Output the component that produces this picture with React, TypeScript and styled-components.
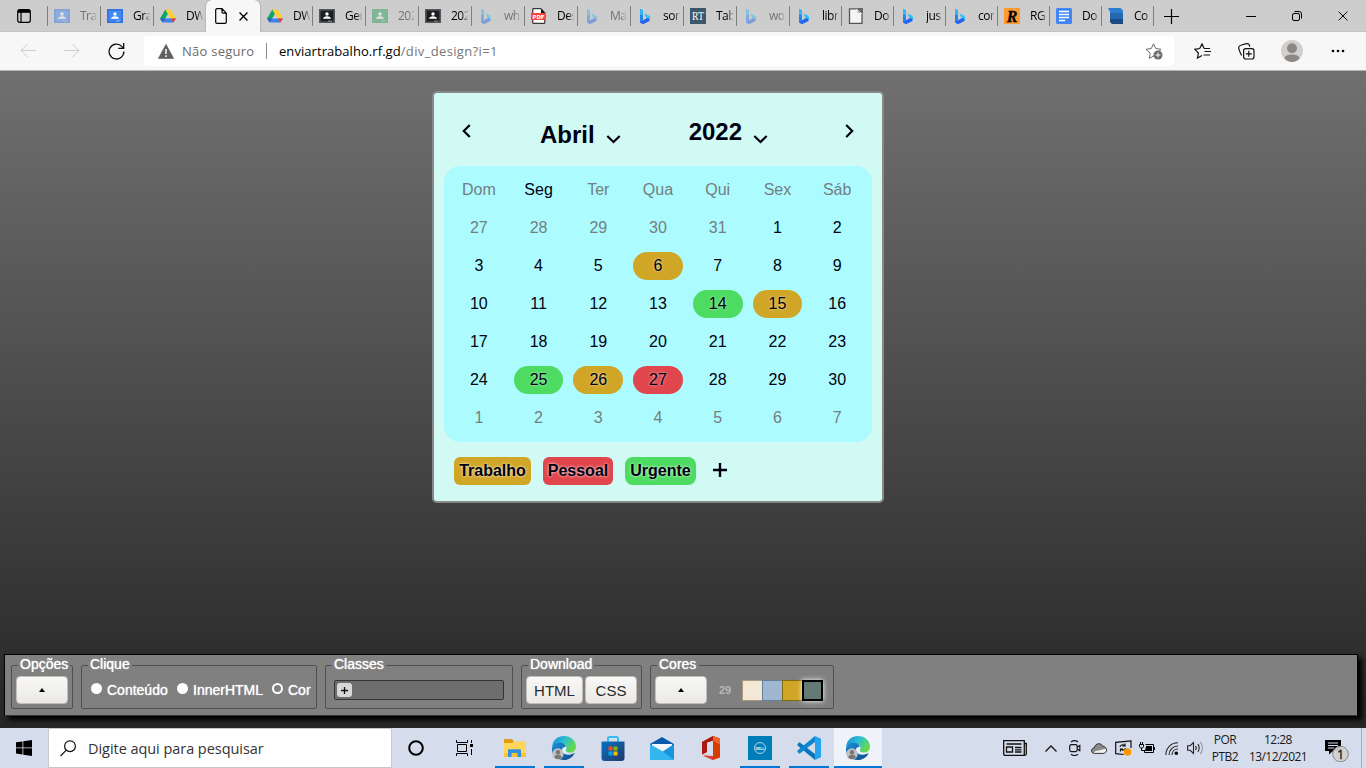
import React from 'react';
import styled, { createGlobalStyle, css } from 'styled-components';

const GlobalStyle = createGlobalStyle`
  *, *::before, *::after { box-sizing: border-box; }
  html, body { margin: 0; padding: 0; overflow: hidden; }
  button { font: inherit; padding: 0; margin: 0; }
`;

const uiFont = `'Open Sans', 'Noto Sans', sans-serif`;
const pageFont = `'Liberation Sans', Arial, sans-serif`;

const Screen = styled.div`
  width: 1366px;
  height: 768px;
  display: flex;
  flex-direction: column;
  font-family: ${uiFont};
  overflow: hidden;
`;

/* ---------- Browser tabs ---------- */

const TabStrip = styled.div`
  height: 32px;
  flex: none;
  display: flex;
  align-items: flex-start;
  background: #cdcdcd;
  border-bottom: 1px solid #c3c3c3;
`;

const TabMenu = styled.div`
  width: 47px;
  height: 32px;
  display: flex;
  align-items: center;
  justify-content: center;
`;

const Tab = styled.div<{ $width: number; $line: boolean; $dim: boolean }>`
  width: ${p => p.$width}px;
  height: 20px;
  margin-top: 6px;
  flex: none;
  display: flex;
  align-items: center;
  gap: 10px;
  padding-left: 6px;
  border-left: 1px solid ${p => (p.$line ? '#808080' : 'transparent')};
  > * { opacity: ${p => (p.$dim ? 0.45 : 1)}; }
`;

const TabTitle = styled.span`
  width: 18px;
  font-size: 12px;
  line-height: 20px;
  letter-spacing: -0.5px;
  color: #000;
  white-space: nowrap;
  overflow: hidden;
  mask-image: linear-gradient(to right, #000 60%, transparent 98%);
`;

const ActiveTab = styled.div`
  width: 54px;
  height: 32px;
  flex: none;
  display: flex;
  align-items: center;
  gap: 12px;
  padding-left: 9px;
  background: #f7f7f7;
  border-radius: 6px 6px 0 0;
  box-shadow: 0 0 2px rgba(0, 0, 0, 0.35);
`;

const NewTab = styled.div`
  width: 36px;
  height: 32px;
  display: flex;
  align-items: center;
  justify-content: center;
  border-left: 1px solid transparent;
  background: linear-gradient(#808080, #808080) 0 6px / 1px 20px no-repeat border-box;
`;

const WindowControls = styled.div`
  display: flex;
  margin-left: auto;
`;

const WindowButton = styled.div`
  width: 46px;
  height: 32px;
  display: flex;
  align-items: center;
  justify-content: center;
`;

/* ---------- Address toolbar ---------- */

const Toolbar = styled.div`
  height: 39px;
  flex: none;
  display: flex;
  align-items: center;
  padding: 0 6px;
  background: #f7f7f7;
  border-bottom: 1px solid #b4b4b4;
`;

const ToolSlot = styled.div<{ $before?: number }>`
  width: 44px;
  height: 30px;
  flex: none;
  margin-left: ${p => p.$before ?? 0}px;
  display: flex;
  align-items: center;
  justify-content: center;
`;

const AddressBar = styled.div`
  width: 1030px;
  height: 30px;
  margin: 0 6px;
  padding: 0 11px 0 14px;
  display: flex;
  align-items: center;
  background: #fff;
  border-radius: 4px;
  font-size: 13px;
`;

const Security = styled.span`
  margin-left: 8px;
  color: #6b6b6b;
  width: 74px;
  letter-spacing: 0.25px;
  white-space: nowrap;
`;

const AddressLine = styled.span`
  width: 1px;
  height: 16px;
  margin: 0 12px 0 10px;
  background: #8a8a8a;
`;

const Url = styled.span`
  color: #777;
  letter-spacing: 0.35px;
  white-space: nowrap;
  flex: 1;
  b { color: #000; font-weight: 400; letter-spacing: 0.06px; }
`;

/* ---------- Page ---------- */

const Page = styled.main`
  height: 657px;
  flex: none;
  display: flex;
  flex-direction: column;
  justify-content: space-between;
  padding: 20px 8px 12px 4px;
  background: linear-gradient(#707070, #262626);
  font-family: ${pageFont};
`;

const Calendar = styled.section`
  width: 452px;
  height: 412px;
  margin-left: 428px;
  border: 2px solid #888;
  border-radius: 5px;
  background: #d2faf4;
  color: #000010;
  padding: 0 10px;
`;

const CalendarHeader = styled.header`
  height: 73px;
  display: flex;
  align-items: flex-start;
`;

const Arrow = styled.span`
  display: flex;
  margin: 31px 18px 0;
`;

const Picker = styled.div<{ $left: number; $top: number; $drop: number }>`
  display: flex;
  margin: ${p => p.$top}px 0 0 ${p => p.$left}px;
  font-size: 24px;
  line-height: 28px;
  font-weight: 700;
  svg { margin: ${p => p.$drop}px 0 0 11px; }
`;

const Spacer = styled.span`
  flex: 1;
`;

const MonthGrid = styled.div`
  height: 276px;
  padding: 5px;
  display: grid;
  grid-template-columns: repeat(7, 1fr);
  grid-auto-rows: 38px;
  border-radius: 16px;
  background: #acfbff;
`;

const Day = styled.div<{ $muted: boolean; $color?: string }>`
  margin: 5px;
  border-radius: 14px;
  font-size: 16px;
  line-height: 27px;
  text-align: center;
  color: ${p => (p.$muted ? '#737f7f' : '#000010')};
  ${p => p.$color && css`
    background: ${p.$color};
    text-shadow: 0 0 3px rgba(255, 255, 255, 0.7);
  `}
`;

const Tags = styled.footer`
  display: flex;
  align-items: center;
  padding: 15px 10px 0;
  gap: 12px;
`;

const Tag = styled.span<{ $color: string; $width: number; $radius?: number }>`
  width: ${p => p.$width}px;
  height: 28px;
  border-radius: ${p => p.$radius ?? 6}px;
  background: ${p => p.$color};
  font-size: 16px;
  line-height: 27px;
  font-weight: 700;
  text-align: center;
  text-shadow: 0 0 3px #fff;
`;

const AddTag = styled.span`
  display: flex;
  margin-left: 5px;
  margin-top: -2px;
`;

/* ---------- Editor bar ---------- */

const EditorBar = styled.section`
  height: 62px;
  display: flex;
  gap: 8px;
  padding: 10px 6px 0;
  background: #808080;
  border: 1px solid #000;
  border-bottom-color: #333;
  box-shadow: 4px 4px 5px #000;
  color: #fff;
  font-size: 14px;
  text-shadow: 0 0 1px #fff;
`;

const Group = styled.div<{ $width: number }>`
  width: ${p => p.$width}px;
  height: 44px;
  flex: none;
  border: 1px solid #505050;
  border-radius: 2px;
  display: flex;
  flex-direction: column;
`;

const GroupName = styled.span<{ $width: number }>`
  width: ${p => p.$width}px;
  height: 16px;
  margin: -10px 0 0 6px;
  padding-left: 2px;
  line-height: 17px;
  background: #808080;
  white-space: nowrap;
`;

const GroupBody = styled.div<{ $left?: number }>`
  height: 28px;
  margin-top: 4px;
  padding-left: ${p => p.$left ?? 4}px;
  display: flex;
  align-items: center;
  gap: 2px;
`;

const LightButton = styled.button<{ $width: number }>`
  width: ${p => p.$width}px;
  height: 28px;
  border: 1px solid #c5beb8;
  border-radius: 4px;
  background: linear-gradient(#f8f8f7, #eae9e7);
  color: #2a2a2a;
  font-size: 15px;
  display: flex;
  align-items: center;
  justify-content: center;
  text-shadow: none;
`;

const Triangle = styled.i`
  border: 3px solid transparent;
  border-top: 0;
  border-bottom: 4px solid #000;
`;

const RadioLabel = styled.label<{ $width: number }>`
  width: ${p => p.$width}px;
  display: flex;
  align-items: center;
  gap: 5px;
  white-space: nowrap;
`;

const RadioMark = styled.i<{ $filled: boolean }>`
  width: 11px;
  height: 11px;
  margin-top: -3px;
  border: 2px solid #fff;
  border-radius: 50%;
  background: ${p => (p.$filled ? '#fff' : 'transparent')};
`;

const ClassField = styled.div`
  width: 170px;
  height: 20px;
  padding: 2px;
  border: 1px solid #333;
  border-radius: 2px;
  background: #6e6e6e;
`;

const ClassAdd = styled.span`
  width: 15px;
  height: 14px;
  border-radius: 3px;
  background: #d8d8d8;
  display: flex;
  align-items: center;
  justify-content: center;
`;

const Count = styled.span`
  width: 21px;
  margin-left: 10px;
  color: #b8b8b8;
  font-size: 11px;
  font-weight: 700;
  text-shadow: none;
`;

const Swatches = styled.div`
  display: flex;
`;

const Swatch = styled.span<{ $color: string; $edge: string; $active?: boolean }>`
  width: ${p => (p.$active ? 21 : 20)}px;
  height: 21px;
  background: ${p => p.$color};
  border: 1px solid ${p => p.$edge};
  border-right: 0;
  ${p => p.$active && css`
    border: 2px solid #000;
    box-shadow: 0 0 5px #fff;
  `}
`;

/* ---------- Taskbar ---------- */

const Taskbar = styled.footer`
  height: 40px;
  flex: none;
  display: flex;
  background: #d5dcec;
`;

const TaskButton = styled.div<{ $open?: boolean; $active?: boolean; $before?: number }>`
  width: 48px;
  height: 40px;
  flex: none;
  margin-left: ${p => p.$before ?? 0}px;
  display: flex;
  align-items: center;
  justify-content: center;
  ${p => p.$open && css`
    background: linear-gradient(#0078d7, #0078d7) center bottom / ${p.$active ? 48 : 40}px 2px no-repeat
      ${p.$active ? ', #eff2f9' : ''};
  `}
`;

const SearchBox = styled.div`
  width: 344px;
  height: 40px;
  display: flex;
  align-items: center;
  gap: 12px;
  padding-left: 11px;
  background: #fff;
  border: 1px solid #c8c8c8;
  color: #333;
  font-size: 14.5px;
  letter-spacing: -0.05px;
`;

const Tray = styled.div`
  margin-left: auto;
  display: flex;
`;

const TraySlot = styled.div<{ $width: number }>`
  width: ${p => p.$width}px;
  height: 40px;
  display: flex;
  align-items: center;
  justify-content: center;
`;

const TrayText = styled.div<{ $width: number; $tight: number }>`
  width: ${p => p.$width}px;
  padding-top: 3px;
  font-size: 12px;
  line-height: 17px;
  letter-spacing: ${p => p.$tight}px;
  text-align: center;
  color: #1a1a1a;
  white-space: nowrap;
`;

const DesktopEdge = styled.div`
  width: 5px;
  border-left: 1px solid #a9afbb;
`;

/* ---------- Icons ---------- */

const ClassroomIcon = ({ frame, fill }: { frame: string; fill: string }) => (
  <svg width="16" height="16" viewBox="0 0 16 16">
    <path d="M0 1h16v14H0z" fill={frame} />
    <path d="M1.6 2.6h12.8v10.8H1.6z" fill={fill} />
    <circle cx="8" cy="6" r="1.7" fill="#fff" />
    <path d="M4 10.800c0-3.400 8-3.400 8 0z" fill="#fff" />
    <path d="M9 12.600h4v.9H9z" fill="#ddd" fillOpacity=".6" />
  </svg>
);

const DriveIcon = () => (
  <svg width="16" height="16" viewBox="0 0 16 16">
    <path d="M5.3 1.4 0 10.5l2.7 4L8 5.8z" fill="#11a663" />
    <path d="M5.3 1.4h5.2L16 10.5h-5.3z" fill="#ffcf33" />
    <path d="m5.3 10.5-2.6 4h10.6l2.7-4z" fill="#3f7ff0" />
    <path d="m10.7 10.5 2.6 4 2.7-4z" fill="#ea4335" />
    <path d="m0 10.5 2.7 4 2.6-4z" fill="#2460d0" />
  </svg>
);

const BingIcon = () => (
  <svg width="16" height="16" viewBox="0 0 16 16">
    <path d="m3 .8 3 1.300v10L3 14z" fill="#35b4f2" />
    <path d="M3 7h3v5L3 14z" fill="#1e86ee" />
    <path d="m3 13.500 3-1.300 3.500-2 3.500-1v2c0 1-.6 1.700-1.400 2.200L7 15.800c-.7.4-1.400.4-2 0L3 14.500z" fill="#2464ee" />
    <path d="m7.300 5.600 4 1.700c1.300.6 1.900 1.500 1.900 2.900 0 .8-.3 1.500-.7 2-.3-1-1-1.700-2-2.100l-1.400-.7z" fill="#2ec0ef" />
  </svg>
);

const PdfIcon = () => (
  <svg width="16" height="16" viewBox="0 0 16 16">
    <path d="M1.800.7h8.400l3.600 4v10.600h-12z" fill="#fff" stroke="#111" />
    <path d="M10 .5V5h4z" fill="#111" />
    <path d="M0 5h15v7H0z" fill="#fa4545" />
    <text x="7.5" y="10.5" textAnchor="middle" fontFamily="DejaVu Sans" fontWeight="700" fontSize="5.400" fill="#fff">PDF</text>
  </svg>
);

const RtIcon = () => (
  <svg width="16" height="16" viewBox="0 0 16 16">
    <path d="M0 0h16v16H0z" fill="#3c566b" />
    <text x="8" y="12" textAnchor="middle" fontFamily="Liberation Serif" fontSize="11.500" textLength="12" lengthAdjust="spacingAndGlyphs" fill="#fff">RT</text>
  </svg>
);

const RIcon = () => (
  <svg width="16" height="16" viewBox="0 0 16 16">
    <path d="M0 0h16v16H0z" fill="#ff9933" />
    <text x="8" y="13.500" textAnchor="middle" fontFamily="Liberation Serif" fontStyle="italic" fontWeight="700" fontSize="16" fill="#000" stroke="#000" strokeWidth=".3">R</text>
  </svg>
);

const OfficeDocIcon = () => (
  <svg width="16" height="16" viewBox="0 0 16 16">
    <path d="M1.500.8h8L14 5v10.300H1.500z" fill="#f5f5f5" stroke="#555" strokeWidth="1.300" />
    <path d="M8.500 0H15v6z" fill="#666" />
    <path d="M9 1v4.500h5" fill="#bbb" stroke="#eee" />
  </svg>
);

const GoogleDocIcon = () => (
  <svg width="16" height="16" viewBox="0 0 16 16">
    <rect width="16" height="16" rx="1.500" fill="#4285f4" />
    <path d="M3 3.500h10M3 6.500h10M3 9.500h10M3 12.500h6" stroke="#fff" strokeWidth="1.400" />
  </svg>
);

const BookIcon = () => (
  <svg width="16" height="16" viewBox="0 0 16 16">
    <path d="M0 0h12.500L15 2.500V10H2V4z" fill="#2d7dd2" />
    <path d="M2 5h13v6H2z" fill="#2468ad" />
    <path d="M2 11h13v5H4l-2-2z" fill="#1b4b85" />
  </svg>
);

const FileIcon = () => (
  <svg width="12" height="16" viewBox="0 0 12 16" fill="none" stroke="#000" strokeWidth="1.200">
    <path d="M2 .7h5l4.300 4.500V14c0 .8-.5 1.300-1.300 1.300H2c-.8 0-1.300-.5-1.300-1.300V2C.7 1.200 1.200.7 2 .7zM7 .7V4c0 .8.4 1.200 1.200 1.200h3.100" />
  </svg>
);

const Cross = ({ size, weight }: { size: number; weight: number }) => (
  <svg width={size} height={size} viewBox="0 0 10 10" stroke="#000" strokeWidth={weight}>
    <path d="m.6.6 8.800 8.800M9.400.6.6 9.400" />
  </svg>
);

const EdgeIcon = () => (
  <svg width="26" height="26" viewBox="0 0 26 26">
    <defs>
      <linearGradient id="edgeTop" x1="0" y1="0" x2="1" y2=".5">
        <stop offset="0" stopColor="#1481d4" />
        <stop offset=".5" stopColor="#2bbfd3" />
        <stop offset="1" stopColor="#67d94c" />
      </linearGradient>
      <linearGradient id="edgeLow" x1="0" y1="0" x2="1" y2="1">
        <stop offset="0" stopColor="#1b8fd8" />
        <stop offset="1" stopColor="#114a8b" />
      </linearGradient>
    </defs>
    <path d="M1 12C2 4.500 7 1 13 1c7 0 12 5 12 10.500 0 4-3 6-6 6-3.500 0-5-1.500-4-3 1.500-2.500-.5-5.500-4-5.500-4 0-8 .8-10 3z" fill="url(#edgeTop)" />
    <path d="M1 13c1-4 5-6 8.500-5.500 3 .3 5 2.500 5.300 4.500-5-1-5.800 7 2.200 7.500 3 .1 5-.5 6.700-1.800C22 22 18 25 13 25 5 25 0 19 1 13z" fill="url(#edgeLow)" />
    <path d="M14.500 11.700c-2.500.8-3.800 3.500-2.300 5.600 1.400 2 5.300 2.700 8.800 1.500-3.500.3-5.500-.7-6.300-2-.7-1.200.9-2.500.5-4.300z" fill="#e8f4ff" />
    <circle cx="7" cy="19" r="5.700" fill="#c2c2c2" />
    <circle cx="7" cy="17.300" r="2.200" fill="#777" />
    <path d="M3.300 22.500c.2-4 7.200-4 7.400 0-2 2-5.400 2-7.400 0z" fill="#777" />
  </svg>
);

const ExplorerIcon = () => (
  <svg width="22" height="19" viewBox="0 0 22 19">
    <path d="M0 1.500C0 .6.5 0 1.300 0H8l2 2.500V6H0z" fill="#e19d0b" />
    <path d="M0 4h8l2-1.600h10.700c.8 0 1.300.5 1.300 1.200V17H0z" fill="#ffd65b" />
    <path d="M0 14h22v4H0z" fill="#f9c337" />
    <path d="M4 18v-6.500c0-.8.5-1.200 1.200-1.200h10.600c.8 0 1.200.5 1.200 1.200V18h-3.500v-4h-6v4z" fill="#3390df" />
  </svg>
);

const StoreIcon = () => (
  <svg width="24" height="25" viewBox="0 0 24 25">
    <defs>
      <linearGradient id="bag" x1="0" y1="0" x2="1" y2="1">
        <stop offset="0" stopColor="#0871c6" />
        <stop offset="1" stopColor="#243866" />
      </linearGradient>
    </defs>
    <path d="M7 7V2.500C7 1.500 7.500 1 8.500 1h7c1 0 1.500.5 1.500 1.500V7" fill="none" stroke="#33bdf0" strokeWidth="2" />
    <path d="M.5 5.500h23V22c0 2-1 3-3 3h-17c-2 0-3-1-3-3z" fill="url(#bag)" />
    <path d="M6 5.500v-2h2v2zm10 0v-2h2v2z" fill="#33bdf0" />
    <path d="M7.500 10.500h4v4h-4z" fill="#f25022" />
    <path d="M12.500 10.500h4v4h-4z" fill="#7fba00" />
    <path d="M7.500 15.500h4v4h-4z" fill="#00a4ef" />
    <path d="M12.500 15.500h4v4h-4z" fill="#ffb900" />
  </svg>
);

const MailIcon = () => (
  <svg width="24" height="23" viewBox="0 0 24 23">
    <path d="M0 7 12 0l12 7v4H0z" fill="#0a5aad" />
    <path d="M2 7h20v8H2z" fill="#f4f8fc" />
    <path d="M24 7v16H0z" fill="#1a94dc" />
    <path d="M0 7v16h24L12 14z" fill="#34b7f0" />
  </svg>
);

const OfficeIcon = () => (
  <svg width="18" height="24" viewBox="0 0 18 24">
    <path d="M0 6 11 0l7 2.500v19L11 24 1 19.500l10 .8V4.500L5 6.500V16l-5 2.500z" fill="#d83b01" />
    <path d="M0 6 11 0v4.500L5 6.500V16l-5 2.500z" fill="#a91b12" />
    <path d="M11 0l7 2.500v6l-7-4z" fill="#f0642c" />
    <path d="M1 19.500 11 20v4z" fill="#e33c3a" />
  </svg>
);

const DellIcon = () => (
  <svg width="24" height="24" viewBox="0 0 24 24">
    <path d="M0 0h24v24H0z" fill="#007db8" />
    <circle cx="12" cy="12" r="5.500" fill="none" stroke="#d7edf7" strokeWidth=".8" />
    <text x="12" y="13.500" textAnchor="middle" fontFamily="Liberation Sans" fontWeight="700" fontSize="4" textLength="9" lengthAdjust="spacingAndGlyphs" fill="#fff">DELL</text>
  </svg>
);

const CodeIcon = () => (
  <svg width="24" height="24" viewBox="0 0 24 24">
    <path d="M.5 8 2.500 6.200 18 18v6L.5 9.500z" fill="#0877b9" />
    <path d="M.5 16 2.500 17.800 18 6V0L.5 14.500z" fill="#0b87ce" />
    <path d="m18 0 6 2.800v18.400L18 24z" fill="#28a4ef" />
  </svg>
);

const classroomBlue = <ClassroomIcon frame="#2f73dc" fill="#4288f5" />;
const classroomDark = <ClassroomIcon frame="#53565b" fill="#1d1e20" />;
const classroomGreen = <ClassroomIcon frame="#20944d" fill="#259e57" />;

type TabInfo = { title: string; icon: React.ReactNode; dim?: boolean; line?: boolean; width?: number };

const tabsBefore: TabInfo[] = [
  { title: 'Tra', icon: classroomBlue, dim: true },
  { title: 'Gra', icon: classroomBlue },
  { title: 'DW', icon: <DriveIcon /> },
];

const tabsAfter: TabInfo[] = [
  { title: 'DW', icon: <DriveIcon />, line: false, width: 52 },
  { title: 'Ger', icon: classroomDark },
  { title: '202', icon: classroomGreen, dim: true },
  { title: '202', icon: classroomDark },
  { title: 'wh', icon: <BingIcon />, dim: true },
  { title: 'Des', icon: <PdfIcon /> },
  { title: 'Ma', icon: <BingIcon />, dim: true },
  { title: 'sor', icon: <BingIcon /> },
  { title: 'Tab', icon: <RtIcon /> },
  { title: 'wo', icon: <BingIcon />, dim: true },
  { title: 'libr', icon: <BingIcon />, width: 52 },
  { title: 'Do', icon: <OfficeDocIcon />, width: 52 },
  { title: 'jus', icon: <BingIcon />, width: 52 },
  { title: 'cor', icon: <BingIcon />, width: 52 },
  { title: 'RG', icon: <RIcon />, width: 52 },
  { title: 'Do', icon: <GoogleDocIcon />, width: 52 },
  { title: 'Co', icon: <BookIcon />, width: 52 },
];

const renderTab = (tab: TabInfo, i: number) => (
  <Tab key={i} $width={tab.width ?? 53} $line={tab.line ?? true} $dim={!!tab.dim}>
    {tab.icon}
    <TabTitle>{tab.title}</TabTitle>
  </Tab>
);

const GOLD = '#d0a627';
const RED = '#e0464c';
const GREEN = '#4ddb62';

const weekdays = ['Dom', 'Seg', 'Ter', 'Qua', 'Qui', 'Sex', 'Sáb'];
const marks: Record<number, string> = { 6: GOLD, 14: GREEN, 15: GOLD, 25: GREEN, 26: GOLD, 27: RED };

const days = [
  ...[27, 28, 29, 30, 31].map(n => ({ n, muted: true })),
  ...Array.from({ length: 30 }, (_, i) => ({ n: i + 1, muted: false })),
  ...[1, 2, 3, 4, 5, 6, 7].map(n => ({ n, muted: true })),
];

const ChevronDown = () => (
  <svg width="15" height="9" viewBox="0 0 15 9" fill="none" stroke="#000010" strokeWidth="2.200">
    <path d="m1.300 1 6.200 6 6.200-6" />
  </svg>
);

const SideChevron = ({ right }: { right?: boolean }) => (
  <svg width="9" height="14" viewBox="0 0 9 14" fill="none" stroke="#000010" strokeWidth="2.200">
    <path d={right ? 'm1.200 1 6 6-6 6' : 'm7.800 1-6 6 6 6'} />
  </svg>
);

export default function App() {
  return (
    <Screen>
      <GlobalStyle />
      <TabStrip>
        <TabMenu>
          <svg width="14" height="14" viewBox="0 0 14 14" fill="none" stroke="#000" strokeWidth="1.200">
            <rect x=".7" y=".7" width="12.600" height="12.600" rx="2" />
            <path d="M1 2.300h12" strokeWidth="3" />
            <path d="M4 3v10" />
          </svg>
        </TabMenu>
        {tabsBefore.map(renderTab)}
        <ActiveTab>
          <FileIcon />
          <Cross size={9} weight={1.5} />
        </ActiveTab>
        {tabsAfter.map(renderTab)}
        <NewTab>
          <svg width="15" height="15" viewBox="0 0 15 15" stroke="#000" strokeWidth="1.200">
            <path d="M7.500 0v15M0 7.500h15" />
          </svg>
        </NewTab>
        <WindowControls>
          <WindowButton>
            <svg width="10" height="10" viewBox="0 0 10 10" stroke="#000"><path d="M0 5.500h10" /></svg>
          </WindowButton>
          <WindowButton>
            <svg width="10" height="10" viewBox="0 0 10 10" fill="none" stroke="#000">
              <rect x=".5" y="2.500" width="7" height="7" rx="1.500" />
              <path d="M2.500.5H7A2.500 2.500 0 0 1 9.500 3v4.500" />
            </svg>
          </WindowButton>
          <WindowButton><Cross size={10} weight={1} /></WindowButton>
        </WindowControls>
      </TabStrip>

      <Toolbar>
        <ToolSlot>
          <svg width="16" height="14" viewBox="0 0 16 14" fill="none" stroke="#cdcdcd"><path d="M16 6.500H1M7.500 0 1 6.500 7.500 13" /></svg>
        </ToolSlot>
        <ToolSlot>
          <svg width="16" height="14" viewBox="0 0 16 14" fill="none" stroke="#cdcdcd"><path d="M0 6.500h15M8.500 0 15 6.500 8.500 13" /></svg>
        </ToolSlot>
        <ToolSlot>
          <svg width="17" height="17" viewBox="0 0 17 17" fill="none" stroke="#111" strokeWidth="1.300">
            <path d="M15.900 8.500A7.400 7.400 0 1 1 14 3.600l1.600 1.700M15.700 0v5.400h-5.400" />
          </svg>
        </ToolSlot>
        <AddressBar>
          <svg width="16" height="15" viewBox="0 0 16 15">
            <path d="M8 .3 15.700 14.500H.3z" fill="#5f5f5f" stroke="#5f5f5f" strokeWidth=".6" strokeLinejoin="round" />
            <path d="M8 5v5M8 11.300v1.700" stroke="#fff" strokeWidth="1.500" />
          </svg>
          <Security>Não seguro</Security>
          <AddressLine />
          <Url><b>enviartrabalho.rf.gd</b>/div_design?i=1</Url>
          <svg width="18" height="17" viewBox="0 0 18 17" fill="none" stroke="#6b6b6b">
            <path d="m9 12.800-4.600 2.600.8-5.200L1 6.300l5.300-.8L8.500.8l2.200 4.700 5.300.8-2 2" />
            <circle cx="13" cy="12" r="4.500" fill="#6b6b6b" stroke="none" />
            <path d="M13 9.500v5M10.500 12h5" stroke="#fff" />
          </svg>
        </AddressBar>
        <ToolSlot>
          <svg width="17" height="16" viewBox="0 0 17 16" fill="none" stroke="#111" strokeWidth="1.200">
            <path d="m8 12.500-4.500 2.500.9-5L.8 6.300l4.900-.8L8 .9l2.200 4.600H16M10.500 8.500H17M9.500 12H16" />
          </svg>
        </ToolSlot>
        <ToolSlot>
          <svg width="17" height="17" viewBox="0 0 17 17" fill="none" stroke="#111" strokeWidth="1.200">
            <rect x="5.600" y="5.600" width="10.400" height="10.400" rx="2.200" />
            <path d="M10.800 7.800v6M7.800 10.800h6M3.600 12.600C2.600 10.500.6 6.500.7 4.500.8 3 2 2.400 3.500 2l5-1.300c1.600-.3 2.500.2 3 1.800l.4 1.200" />
          </svg>
        </ToolSlot>
        <ToolSlot $before={2}>
          <svg width="22" height="22" viewBox="0 0 22 22">
            <circle cx="11" cy="11" r="11" fill="#d2d0ce" />
            <circle cx="11" cy="8.300" r="5" fill="#8b8886" />
            <path d="M3.500 18.500c0-5.500 15-5.500 15 0-4 4.500-11 4.500-15 0z" fill="#8b8886" />
          </svg>
        </ToolSlot>
        <ToolSlot $before={2}>
          <svg width="14" height="4" viewBox="0 0 14 4"><circle cx="2" cy="2" r="1.300" /><circle cx="7" cy="2" r="1.300" /><circle cx="12" cy="2" r="1.300" /></svg>
        </ToolSlot>
      </Toolbar>

      <Page>
        <Calendar>
          <CalendarHeader>
            <Arrow><SideChevron /></Arrow>
            <Picker $left={51} $top={28} $drop={14}>Abril<ChevronDown /></Picker>
            <Picker $left={68} $top={25} $drop={17}>2022<ChevronDown /></Picker>
            <Spacer />
            <Arrow><SideChevron right /></Arrow>
          </CalendarHeader>
          <MonthGrid>
            {weekdays.map(name => <Day key={name} $muted={name !== 'Seg'}>{name}</Day>)}
            {days.map((d, i) => (
              <Day key={i} $muted={d.muted} $color={d.muted ? undefined : marks[d.n]}>{d.n}</Day>
            ))}
          </MonthGrid>
          <Tags>
            <Tag $color={GOLD} $width={77}>Trabalho</Tag>
            <Tag $color={RED} $width={70}>Pessoal</Tag>
            <Tag $color={GREEN} $width={71} $radius={8}>Urgente</Tag>
            <AddTag>
              <svg width="14" height="14" viewBox="0 0 14 14" stroke="#000010" strokeWidth="2.400"><path d="M7 0v14M0 7h14" /></svg>
            </AddTag>
          </Tags>
        </Calendar>

        <EditorBar>
          <Group $width={62}>
            <GroupName $width={52}>Opções</GroupName>
            <GroupBody><LightButton $width={52}><Triangle /></LightButton></GroupBody>
          </Group>
          <Group $width={236}>
            <GroupName $width={44}>Clique</GroupName>
            <GroupBody $left={9}>
              <RadioLabel $width={84}><RadioMark $filled />Conteúdo</RadioLabel>
              <RadioLabel $width={93}><RadioMark $filled />InnerHTML</RadioLabel>
              <RadioLabel $width={40}><RadioMark $filled={false} />Cor</RadioLabel>
            </GroupBody>
          </Group>
          <Group $width={188}>
            <GroupName $width={54}>Classes</GroupName>
            <GroupBody $left={8}>
              <ClassField>
                <ClassAdd>
                  <svg width="7" height="7" viewBox="0 0 7 7" stroke="#111" strokeWidth="1.300"><path d="M3.500 0v7M0 3.500h7" /></svg>
                </ClassAdd>
              </ClassField>
            </GroupBody>
          </Group>
          <Group $width={121}>
            <GroupName $width={66}>Download</GroupName>
            <GroupBody>
              <LightButton $width={57}>HTML</LightButton>
              <LightButton $width={52}>CSS</LightButton>
            </GroupBody>
          </Group>
          <Group $width={184}>
            <GroupName $width={42}>Cores</GroupName>
            <GroupBody>
              <LightButton $width={52}><Triangle /></LightButton>
              <Count>29</Count>
              <Swatches>
                <Swatch $color="#f3e8d6" $edge="#a9987c" />
                <Swatch $color="#9fb7d0" $edge="#64809c" />
                <Swatch $color="#d0a627" $edge="#86690f" />
                <Swatch $color="#667a75" $edge="#000" $active />
              </Swatches>
            </GroupBody>
          </Group>
        </EditorBar>
      </Page>

      <Taskbar>
        <TaskButton>
          <svg width="16" height="16" viewBox="0 0 16 16"><path d="M0 2.300 6.500 1.400v6.100H0zM7.300 1.300 16 0v7.500H7.300zM0 8.300h6.500v6.200L0 13.600zM7.300 8.300H16V16l-8.700-1.300z" /></svg>
        </TaskButton>
        <SearchBox>
          <svg width="16" height="17" viewBox="0 0 16 17" fill="none" stroke="#111" strokeWidth="1.200"><circle cx="10" cy="6.200" r="5.400" /><path d="M6.200 10.200.5 16" /></svg>
          Digite aqui para pesquisar
        </SearchBox>
        <TaskButton>
          <svg width="16" height="16" viewBox="0 0 16 16"><circle cx="8" cy="8" r="6.800" fill="none" stroke="#000" strokeWidth="2" /></svg>
        </TaskButton>
        <TaskButton>
          <svg width="17" height="16" viewBox="0 0 17 16" fill="none" stroke="#000">
            <path d="M.5 0v2.500h11V0M.5 16v-2.500h11V16M1.500 4.500h9v7h-9zM15.500 0v3M15.500 9v6" />
            <path d="M14 4h3v3h-3z" fill="#000" stroke="none" />
          </svg>
        </TaskButton>
        <TaskButton $before={3} $open><ExplorerIcon /></TaskButton>
        <TaskButton $before={1} $open><EdgeIcon /></TaskButton>
        <TaskButton $before={1}><StoreIcon /></TaskButton>
        <TaskButton $before={1}><MailIcon /></TaskButton>
        <TaskButton $before={1}><OfficeIcon /></TaskButton>
        <TaskButton $before={1} $open><DellIcon /></TaskButton>
        <TaskButton $before={1} $open><CodeIcon /></TaskButton>
        <TaskButton $before={1} $open $active><EdgeIcon /></TaskButton>
        <Tray>
          <TraySlot $width={48}>
            <svg width="24" height="16" viewBox="0 0 24 16" fill="none" stroke="#111" strokeWidth="1.300">
              <path d="M.7.700h20.600v14.600H2C1.200 15.300.7 14.800.7 14zM21.300 3.500h2v10.300c0 1-.6 1.500-1.500 1.500M3.500 4h15M3.500 7h6v5h-6zM12 7.500h6.500M12 9.800h6.500M12 12h6.500" />
            </svg>
          </TraySlot>
          <TraySlot $width={24}>
            <svg width="12" height="7" viewBox="0 0 12 7" fill="none" stroke="#111" strokeWidth="1.300"><path d="m.5 6.500 5.500-5.500 5.500 5.500" /></svg>
          </TraySlot>
          <TraySlot $width={24}>
            <svg width="12" height="16" viewBox="0 0 12 16" fill="none" stroke="#111" strokeWidth="1.200">
              <rect x=".7" y="4.600" width="7.500" height="7" rx="1.800" />
              <path d="m8.200 7 2.600-1.500v5.200L8.200 9.200M2 2c2-1.500 5-1.500 7 0M2 14.200c2 1.500 5 1.500 7 0" />
            </svg>
          </TraySlot>
          <TraySlot $width={24}>
            <svg width="16" height="11" viewBox="0 0 16 11">
              <path d="M3.500 10.400C1.500 10.400.5 9 .5 7.700c0-1.700 1.200-2.700 2.700-2.700C3.700 2.500 5.400.7 7.800.7c2 0 3.300 1 4 2.600 2 0 3.700 1.500 3.700 3.600 0 2-1.500 3.500-3.200 3.500z" fill="#8a8a8a" />
              <path d="M2.500 10.400c.6-2 2.500-3 4.200-2.600l8.600-2.200c.5 3-1 4.800-3 4.800z" fill="#f2f2f2" />
              <path d="M3.500 10.400C1.500 10.400.5 9 .5 7.700c0-1.700 1.200-2.700 2.700-2.700C3.700 2.500 5.400.7 7.800.7c2 0 3.300 1 4 2.600 2 0 3.700 1.500 3.700 3.600 0 2-1.500 3.500-3.200 3.500z" fill="none" stroke="#333" />
            </svg>
          </TraySlot>
          <TraySlot $width={24}>
            <svg width="17" height="16" viewBox="0 0 17 16" fill="none" stroke="#111" strokeWidth="1.200">
              <path d="M16 8V.8L.7 2.300v11.400l8 .8M5 7c.2-2 3-3 4.700-1M10 3.500V6H7.500M10.500 8c-.4 2-3 3-4.500 1M5.500 11.500V9H8" />
              <circle cx="12.500" cy="12" r="3.800" fill="#ff9800" stroke="none" />
            </svg>
          </TraySlot>
          <TraySlot $width={24}>
            <svg width="16" height="12" viewBox="0 0 16 12" fill="none" stroke="#000">
              <path d="M6.500 2.500h8v8h-9V8M15.500 5v3M1.500 0v2.500M3.500 0v2.500M.5 2.500h4v2c0 1.200-1 1.500-2 1.500S.5 5.700.5 4.500zM2.500 6v2.500H5" />
              <path d="M7 4h6v5H6z" fill="#000" stroke="none" />
            </svg>
          </TraySlot>
          <TraySlot $width={24}>
            <svg width="13" height="13" viewBox="0 0 13 13" fill="none" stroke="#222" strokeWidth="1.100">
              <path d="M.8 13C.8 6 6 .8 13 .8M4 13c0-5 4-9 9-9M7 13c0-3.500 2.500-6 6-6" />
              <circle cx="11.300" cy="11.300" r="1.700" fill="#000" stroke="none" />
            </svg>
          </TraySlot>
          <TraySlot $width={24}>
            <svg width="17" height="14" viewBox="0 0 17 14" fill="none" stroke="#222" strokeWidth="1.100">
              <path d="M.6 4.700h2.600L6.500 1.500v11L3.200 9.300H.6zM8.500 5c.8 1 .8 3 0 4M10.800 3.200c1.800 2 1.800 5.600 0 7.600" />
              <path d="M13.200 1c3 3 3 9 0 12" stroke="#999" />
            </svg>
          </TraySlot>
          <TrayText $width={36} $tight={-0.5}>POR<br />PTB2</TrayText>
          <TrayText $width={70} $tight={-0.55}>12:28<br />13/12/2021</TrayText>
          <TraySlot $width={48}>
            <svg width="25" height="27" viewBox="0 0 25 27">
              <path d="M0 5h16v11H8l-4 3.500V16H0z" />
              <path d="M3 8h10M3 10.500h10M3 13h6" stroke="#d5dcec" />
              <circle cx="15.500" cy="20" r="7.800" fill="#d0d0d0" fillOpacity=".93" stroke="#888" transform="translate(0 -1)" />
              <text x="15.500" y="23.500" textAnchor="middle" fontFamily="Open Sans" fontSize="12.500" fill="#111" stroke="#111" strokeWidth=".3">1</text>
            </svg>
          </TraySlot>
          <DesktopEdge />
        </Tray>
      </Taskbar>
    </Screen>
  );
}
